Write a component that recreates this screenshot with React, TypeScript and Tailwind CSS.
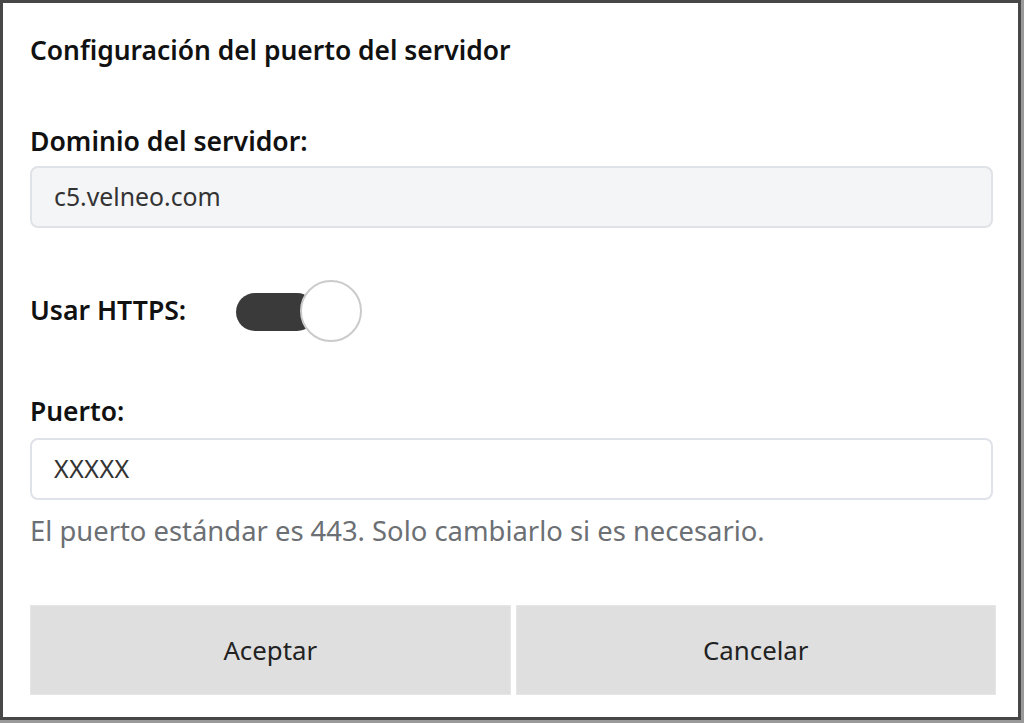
import React from "react";

export default function App() {
  const font = { fontFamily: '"Noto Sans", "Open Sans", sans-serif' };
  return (
    <div className="w-[1024px] h-[723px] bg-[#9a9a9a] pr-[3px] pb-[3px]" style={font}>
      <div className="w-full h-full bg-white border-[3px] border-[#474747] flex flex-col pl-[27px] pr-[25px]">
        <div className="mt-[31px] h-[32px] leading-[32px] text-[26.4px] font-semibold text-[#111] whitespace-nowrap">
          Configuración del puerto del servidor
        </div>
        <div className="mt-[59px] h-[32px] leading-[32px] text-[26.6px] font-semibold text-[#111] whitespace-nowrap">
          Dominio del servidor:
        </div>
        <div className="mt-[9px] h-[62px] w-[963px] rounded-[8px] border-2 border-[#dfe2e6] bg-[#f4f5f7] flex items-center pl-[22px] text-[24.8px] text-[#333]">
          c5.velneo.com
        </div>
        <div className="mt-[52px] h-[62px] flex items-center">
          <span className="text-[26.6px] font-semibold text-[#111] w-[206px] whitespace-nowrap">Usar HTTPS:</span>
          <div className="relative w-[126px] h-[62px]">
            <div className="absolute left-0 top-[13px] w-[80px] h-[38px] rounded-full bg-[#3a3a3a]" />
            <div className="absolute left-[64px] top-0 w-[62px] h-[62px] rounded-full bg-white border-2 border-[#cbcbcb]" />
          </div>
        </div>
        <div className="mt-[53px] h-[32px] leading-[32px] text-[26.4px] font-semibold text-[#111]">
          Puerto:
        </div>
        <div className="mt-[11px] h-[62px] w-[963px] rounded-[8px] border-2 border-[#dfe2e8] bg-white flex items-center pl-[22px] text-[25px] text-[#333] tracking-[0.5px]">
          XXXXX
        </div>
        <div className="mt-[15px] h-[32px] leading-[32px] text-[27.4px] text-[#6c6f73] whitespace-nowrap">
          El puerto estándar es 443. Solo cambiarlo si es necesario.
        </div>
        <div className="mt-[58px] flex gap-[5px] w-[966px]">
          <div className="flex-1 h-[90px] bg-[#dfdfdf] border border-[#e6e6e6] flex items-center justify-center text-[25.8px] text-[#222]">
            Aceptar
          </div>
          <div className="flex-1 h-[90px] bg-[#dfdfdf] border border-[#e6e6e6] flex items-center justify-center text-[25.8px] text-[#222]">
            Cancelar
          </div>
        </div>
      </div>
    </div>
  );
}
